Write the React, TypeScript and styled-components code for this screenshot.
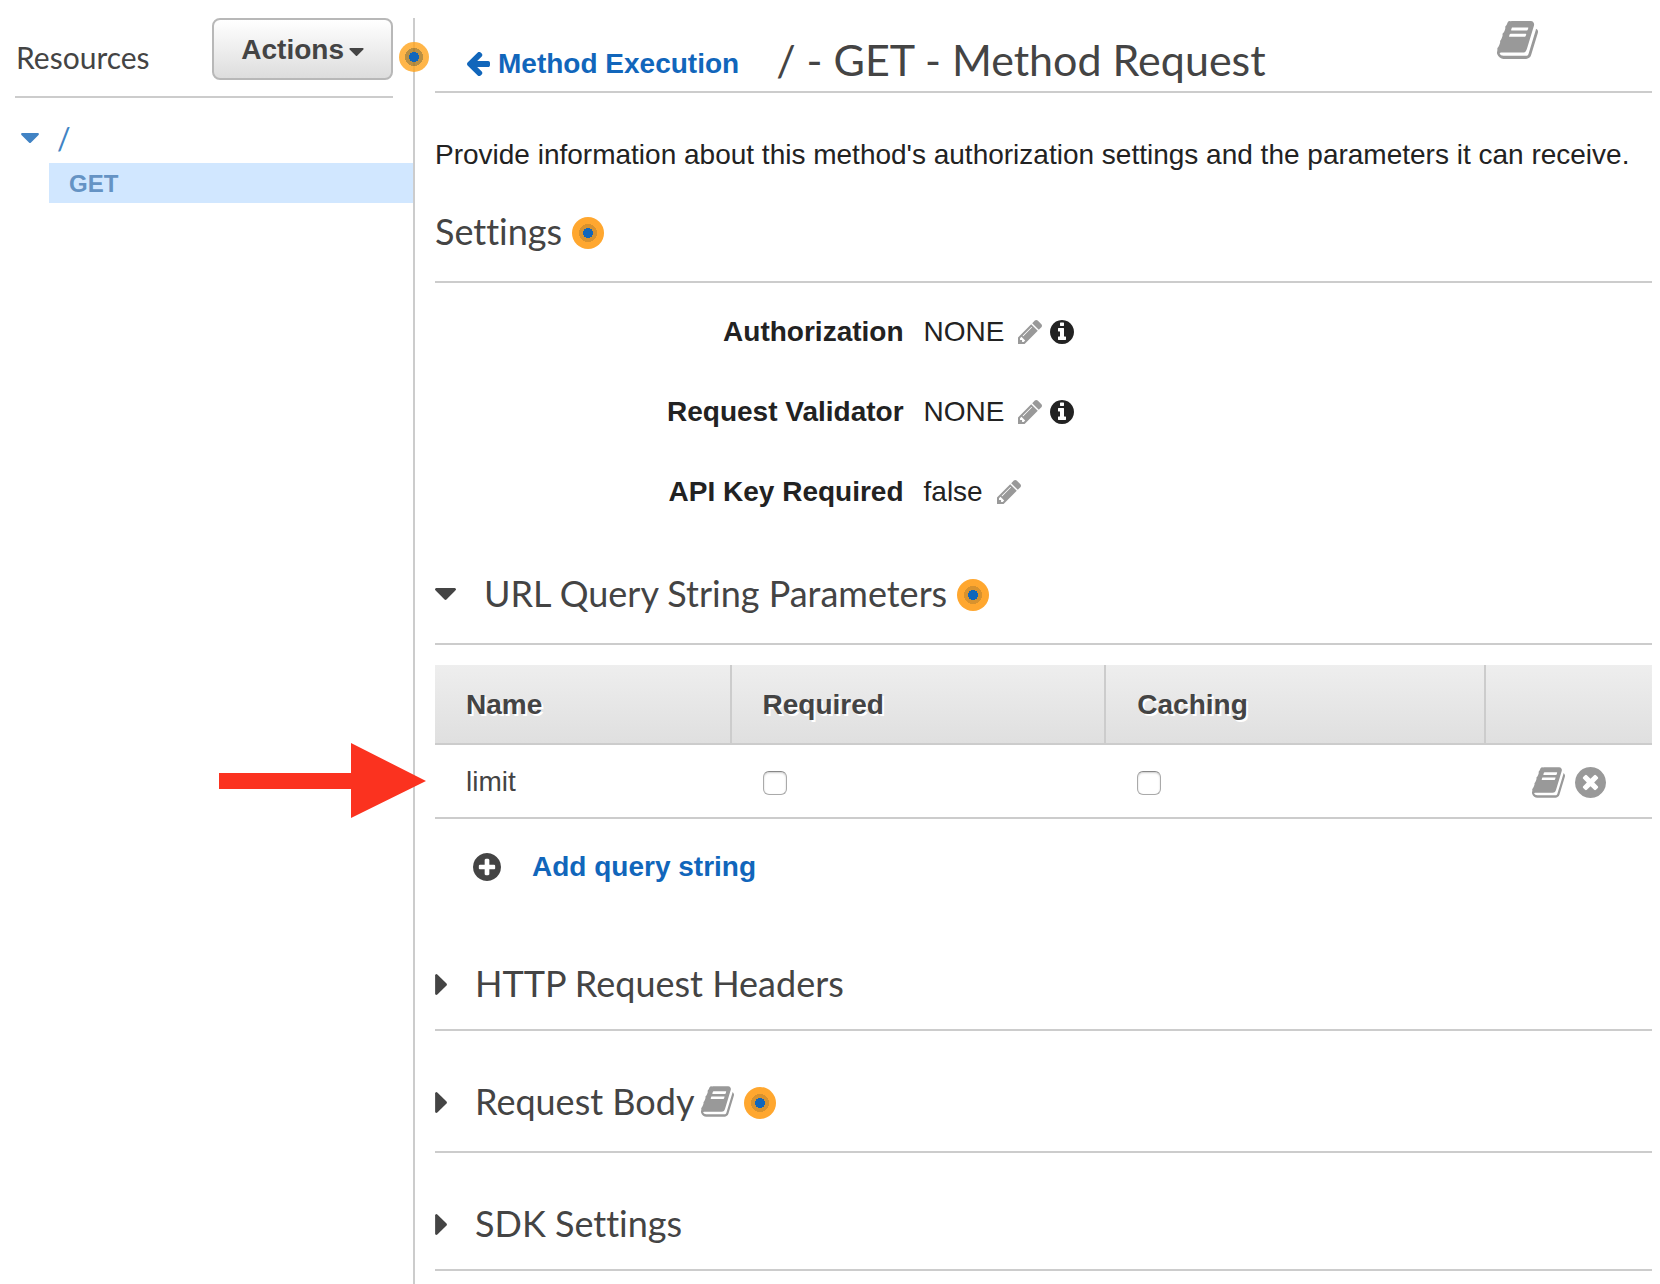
import React from "react";
import styled, { createGlobalStyle, css } from "styled-components";

const sans = `"Liberation Sans", Arial, Helvetica, sans-serif`;
const rule = "2px solid #ccc";

const displayFont = (size: number, line: number) => css`
  font: ${size}px/${line}px Lato, "Liberation Sans", sans-serif;
  font-variant-ligatures: none;
`;

const GlobalStyle = createGlobalStyle`
  *, *::before, *::after { box-sizing: border-box; }
  body {
    margin: 0;
    background: #fff;
    color: #222;
    font: 28px/40px ${sans};
  }
  button {
    border: 0;
    padding: 0;
    background: none;
    color: inherit;
    font: inherit;
    font-variant-ligatures: inherit;
    cursor: pointer;
  }
  h1, h2, p, dl, dd, ul { margin: 0; padding: 0; font-weight: 400; }
  a { text-decoration: none; }
  svg { display: block; flex: none; }
`;

/* ---------- icons ---------- */

const disc =
  "M1664 896q0 209-103 385.5t-279.5 279.5-385.5 103-385.5-103-279.5-279.5-103-385.5 103-385.5 279.5-279.5 385.5-103 385.5 103 279.5 279.5 103 385.5z";

const glyphs = {
  book: {
    box: "64 128 1664 1536",
    d: "M1703 478q40 57 18 129l-275 906q-19 64-76.5 107.5t-122.5 43.5h-923q-77 0-148.5-53.5t-99.5-131.5q-24-67-2-127 0-4 3-27t4-37q1-8-3-21.5t-3-19.5q2-11 8-21t16.5-23.5 16.5-23.5q23-38 45-91.5t30-91.5q3-10 .5-30t-.5-28q3-11 17-28t17-23q21-36 42-92t25-90q1-9-2.5-32t.5-28q4-13 22-30.5t22-22.5q19-26 42.5-84.5t27.5-96.5q1-8-3-25.5t-2-26.5q2-8 9-18t18-23 17-21q8-12 16.5-30.5t15-35 16-36 19.5-32 26.5-23.5 36-11.5 47.5 5.5l-1 3q38-9 51-9h761q74 0 114 56t18 130l-274 906q-36 119-71.5 153.5t-128.5 34.5h-869q-27 0-38 15-11 16-1 43 24 70 144 70h923q29 0 56-15.5t35-41.5l300-987q7-22 5-57 38 15 59 43zm-1064 2q-4 13 2 22.5t20 9.5h608q13 0 25.5-9.5t16.5-22.5l21-64q4-13-2-22.5t-20-9.5h-608q-13 0-25.5 9.5t-16.5 22.5zm-83 256q-4 13 2 22.5t20 9.5h608q13 0 25.5-9.5t16.5-22.5l21-64q4-13-2-22.5t-20-9.5h-608q-13 0-25.5 9.5t-16.5 22.5z",
  },
  pencil: {
    box: "128 149 1515 1515",
    d: "M491 1536l91-91-235-235-91 91v107h128v128h107zm523-928q0-22-22-22-10 0-17 7l-542 542q-7 7-7 17 0 22 22 22 10 0 17-7l542-542q7-7 7-17zm-54-192l416 416-832 832h-416v-416zm683 96q0 53-37 90l-166 166-416-416 166-165q36-38 90-38 53 0 91 38l235 234q37 39 37 91z",
  },
  info: {
    box: "128 128 1536 1536",
    d: "M1152 1376v-160q0-14-9-23t-23-9h-96v-512q0-14-9-23t-23-9h-320q-14 0-23 9t-9 23v160q0 14 9 23t23 9h96v320h-96q-14 0-23 9t-9 23v160q0 14 9 23t23 9h448q14 0 23-9t9-23zm-128-896v-160q0-14-9-23t-23-9h-192q-14 0-23 9t-9 23v160q0 14 9 23t23 9h192q14 0 23-9t9-23z" + disc,
  },
  plus: {
    box: "128 128 1536 1536",
    d: "M1344 960v-128q0-26-19-45t-45-19h-256v-256q0-26-19-45t-45-19h-128q-26 0-45 19t-19 45v256h-256q-26 0-45 19t-19 45v128q0 26 19 45t45 19h256v256q0 26 19 45t45 19h128q26 0 45-19t19-45v-256h256q26 0 45-19t19-45z" + disc,
  },
  remove: {
    box: "128 128 1536 1536",
    d: "M1277 1122q0-26-19-45l-181-181 181-181q19-19 19-45 0-27-19-46l-90-90q-19-19-46-19-26 0-45 19l-181 181-181-181q-19-19-45-19-27 0-46 19l-90 90q-19 19-19 46 0 26 19 45l181 181-181 181q-19 19-19 45 0 27 19 46l90 90q19 19 46 19 26 0 45-19l181-181 181 181q19 19 45 19 27 0 46-19l90-90q19-19 19-46z" + disc,
  },
  back: {
    box: "128 213 1536 1494",
    d: "M1664 896v128q0 53-32.5 90.5t-84.5 37.5h-704l293 294q38 36 38 90t-38 90l-75 76q-37 37-90 37-52 0-91-37l-651-652q-37-37-37-90 0-52 37-91l651-650q38-38 91-38 52 0 90 38l75 74q38 38 38 91t-38 91l-293 293h704q52 0 84.5 37.5t32.5 90.5z",
  },
  caretDown: {
    box: "384 640 1024 576",
    d: "M1408 704q0 26-19 45l-448 448q-19 19-45 19t-45-19l-448-448q-19-19-19-45t19-45 45-19h896q26 0 45 19t19 45z",
  },
  caretRight: {
    box: "576 384 576 1024",
    d: "M1152 896q0 26-19 45l-448 448q-19 19-45 19t-45-19-19-45v-896q0-26 19-45t45-19 45 19l448 448q19 19 19 45z",
  },
};

type IconProps = { name: keyof typeof glyphs; width: number; height: number };

const Icon = ({ name, width, height }: IconProps) => (
  <svg width={width} height={height} viewBox={glyphs[name].box} fill="currentColor" fillRule="evenodd" aria-hidden="true">
    <path d={glyphs[name].d} />
  </svg>
);

/* ---------- shared parts ---------- */

const IconButton = styled.button<{ $dark?: boolean }>`
  display: flex;
  color: ${(p) => (p.$dark ? "#222" : "#999")};
`;

const Pulse = styled.button`
  flex: none;
  width: 32px;
  height: 32px;
  margin: 4px 0 0 3px;
  border-radius: 50%;
  background: radial-gradient(circle, #16b 5px, #d8922e 5px 9px, #ffa72f 9px);
`;

/* ---------- sidebar ---------- */

const Shell = styled.div`
  display: flex;
  min-height: 100vh;
  padding-top: 18px;
`;

const Sidebar = styled.nav`
  position: relative;
  flex: 0 0 25%;
  min-width: 380px;
  border-right: ${rule};
`;

const SidebarHeader = styled.header`
  display: flex;
  justify-content: space-between;
  align-items: center;
  margin: 0 20px 0 15px;
  padding-bottom: 16px;
  border-bottom: ${rule};
`;

const SidebarTitle = styled.h2`
  padding: 16px 0 0 1px;
  color: #444;
  ${displayFont(30, 36)}
`;

const ActionsButton = styled.button`
  display: flex;
  align-items: center;
  gap: 5px;
  height: 62px;
  padding: 2px 27px 0;
  border: 2px solid #b8b8b8;
  border-radius: 8px;
  background: linear-gradient(#fff, #ddd);
  color: #444;
  font-weight: 700;

  svg {
    margin-top: 4px;
  }
`;

const SidebarPulse = styled(Pulse)`
  position: absolute;
  top: 24px;
  right: -16px;
  width: 30px;
  height: 30px;
  margin: 0;
  background: radial-gradient(circle, #16b 5px, rgba(168, 115, 20, 0.8) 5px 9px, rgba(255, 163, 27, 0.8) 9px);
`;

const Tree = styled.ul`
  padding-top: 20px;
  list-style: none;
`;

const RootNode = styled.button`
  display: flex;
  align-items: center;
  gap: 18px;
  height: 45px;
  padding: 0 0 6px 21px;
  color: #4183c4;
  ${displayFont(30, 36)}
`;

const MethodNode = styled.a`
  display: block;
  margin-left: 49px;
  padding: 2px 0 0 20px;
  background: #d1e7ff;
  color: #6593c4;
  font-size: 24px;
  line-height: 38px;
  font-weight: 700;
`;

/* ---------- main column ---------- */

const Main = styled.main`
  flex: 1;
  min-width: 0;
  padding: 0 8px 12px 20px;
`;

const PageHeader = styled.header`
  display: flex;
  align-items: baseline;
  padding: 15px 114px 4px 31px;
  border-bottom: ${rule};
`;

const BackLink = styled.a`
  display: flex;
  align-items: center;
  gap: 8px;
  color: #16b;
  font-weight: 700;
`;

const Title = styled.h1`
  flex: 1;
  margin-left: 37px;
  color: #444;
  ${displayFont(43, 54)}
`;

const HeaderDocs = styled(IconButton)`
  align-self: flex-start;
  margin-top: -12px;
`;

const Intro = styled.p`
  padding: 42px 0 34px;
`;

const SectionHeader = styled.header<{ $tall?: boolean }>`
  display: flex;
  align-items: center;
  gap: 7px;
  padding-bottom: ${(p) => (p.$tall ? 28 : 24)}px;
  border-bottom: ${rule};
  color: #444;
`;

const SectionTitle = styled.h2`
  ${displayFont(36, 44)}
`;

const Toggle = styled.button<{ $gap: number }>`
  display: flex;
  align-items: center;
  gap: ${(p) => p.$gap}px;

  svg {
    margin-top: 2px;
  }
`;

const Section = styled.section`
  margin-top: 48px;
`;

const SettingsList = styled.dl`
  display: grid;
  gap: 40px;
  padding: 29px 0 59px;
`;

const Setting = styled.div`
  display: grid;
  grid-template-columns: 38.5% 1fr;
  column-gap: 20px;
`;

const SettingName = styled.dt`
  font-weight: 700;
  text-align: right;
`;

const SettingValue = styled.dd`
  display: flex;
  align-items: center;
  gap: 8px;
`;

const ValueText = styled.span`
  margin-right: 6px;
`;

/* ---------- parameter table ---------- */

const ParamTable = styled.table`
  width: 100%;
  margin-top: 20px;
  border-spacing: 0;
  table-layout: fixed;
  color: #444;
`;

const Col = styled.col<{ $share: number }>`
  width: ${(p) => p.$share}%;
`;

const HeadRow = styled.tr`
  background: linear-gradient(#eee, #dfdfdf);
`;

const HeadCell = styled.th`
  height: 80px;
  padding: 2px 0 0 31px;
  border-bottom: ${rule};
  text-align: left;
  text-shadow: 2px 2px 0 #fff;

  & + & {
    border-left: ${rule};
  }
`;

const Cell = styled.td`
  position: relative;
  height: 74px;
  padding: 2px 0 0 31px;
  border-bottom: ${rule};
`;

const CheckBox = styled.input`
  display: block;
  appearance: none;
  width: 24px;
  height: 24px;
  margin: 2px 0 0 2px;
  border: 1px solid #aaa;
  border-top-color: #888;
  border-radius: 6px;
  background: #fff;
  box-shadow: inset 0 1px 2px #ccc;
`;

const RowActions = styled.div`
  display: flex;
  align-items: center;
  gap: 10px;
  padding-left: 17px;
`;

const Pointer = styled.div`
  position: absolute;
  top: -2px;
  left: -216px;
  color: #fb321f;
  pointer-events: none;
`;

const AddButton = styled.button`
  display: flex;
  align-items: center;
  gap: 31px;
  margin: 28px 0 74px 38px;
  color: #444;
`;

const AddLabel = styled.span`
  color: #16b;
  font-weight: 700;
`;

const settings = [
  { name: "Authorization", value: "NONE", info: true },
  { name: "Request Validator", value: "NONE", info: true },
  { name: "API Key Required", value: "false", info: false },
];

const CollapsedToggle = ({ children }: { children: React.ReactNode }) => (
  <SectionTitle>
    <Toggle $gap={28} aria-expanded="false">
      <Icon name="caretRight" width={12} height={21} />
      {children}
    </Toggle>
  </SectionTitle>
);

export default function App() {
  return (
    <>
      <GlobalStyle />
      <Shell>
        <Sidebar aria-label="Resources">
          <SidebarHeader>
            <SidebarTitle>Resources</SidebarTitle>
            <ActionsButton>
              Actions
              <Icon name="caretDown" width={15} height={8} />
            </ActionsButton>
          </SidebarHeader>
          <SidebarPulse aria-label="Help with actions" />
          <Tree>
            <li>
              <RootNode aria-expanded="true">
                <Icon name="caretDown" width={18} height={10} />/
              </RootNode>
              <MethodNode href="#get">GET</MethodNode>
            </li>
          </Tree>
        </Sidebar>

        <Main>
          <PageHeader>
            <BackLink href="#method-execution">
              <Icon name="back" width={24} height={24} />
              Method Execution
            </BackLink>
            <Title>/ - GET - Method Request</Title>
            <HeaderDocs aria-label="Documentation">
              <Icon name="book" width={41} height={38} />
            </HeaderDocs>
          </PageHeader>

          <Intro>Provide information about this method's authorization settings and the parameters it can receive.</Intro>

          <SectionHeader $tall>
            <SectionTitle>Settings</SectionTitle>
            <Pulse aria-label="Help with settings" />
          </SectionHeader>
          <SettingsList>
            {settings.map((s) => (
              <Setting key={s.name}>
                <SettingName>{s.name}</SettingName>
                <SettingValue>
                  <ValueText>{s.value}</ValueText>
                  <IconButton aria-label={`Edit ${s.name}`}>
                    <Icon name="pencil" width={24} height={24} />
                  </IconButton>
                  {s.info && (
                    <IconButton $dark aria-label={`About ${s.name}`}>
                      <Icon name="info" width={24} height={24} />
                    </IconButton>
                  )}
                </SettingValue>
              </Setting>
            ))}
          </SettingsList>

          <SectionHeader $tall>
            <SectionTitle>
              <Toggle $gap={28} aria-expanded="true">
                <Icon name="caretDown" width={21} height={12} />
                URL Query String Parameters
              </Toggle>
            </SectionTitle>
            <Pulse aria-label="Help with query string parameters" />
          </SectionHeader>
          <ParamTable>
            <colgroup>
              <Col $share={24.2} />
              <Col $share={30.8} />
              <Col $share={31.2} />
              <Col $share={13.8} />
            </colgroup>
            <thead>
              <HeadRow>
                <HeadCell>Name</HeadCell>
                <HeadCell>Required</HeadCell>
                <HeadCell>Caching</HeadCell>
                <HeadCell aria-label="Row actions" />
              </HeadRow>
            </thead>
            <tbody>
              <tr>
                <Cell>
                  limit
                  <Pointer>
                    <svg width="208" height="76" viewBox="0 0 208 76" fill="currentColor" aria-hidden="true">
                      <path d="M0 30H132V0L207 38L132 75V46H0Z" />
                    </svg>
                  </Pointer>
                </Cell>
                <Cell>
                  <CheckBox type="checkbox" aria-label="limit required" />
                </Cell>
                <Cell>
                  <CheckBox type="checkbox" aria-label="limit caching" />
                </Cell>
                <Cell>
                  <RowActions>
                    <IconButton aria-label="Document limit">
                      <Icon name="book" width={33} height={31} />
                    </IconButton>
                    <IconButton aria-label="Remove limit">
                      <Icon name="remove" width={31} height={31} />
                    </IconButton>
                  </RowActions>
                </Cell>
              </tr>
            </tbody>
          </ParamTable>
          <AddButton>
            <Icon name="plus" width={28} height={28} />
            <AddLabel>Add query string</AddLabel>
          </AddButton>

          <SectionHeader>
            <CollapsedToggle>HTTP Request Headers</CollapsedToggle>
          </SectionHeader>
          <Section>
            <SectionHeader $tall>
              <CollapsedToggle>Request Body</CollapsedToggle>
              <IconButton aria-label="Document request body">
                <Icon name="book" width={33} height={31} />
              </IconButton>
              <Pulse aria-label="Help with request body" />
            </SectionHeader>
          </Section>
          <Section>
            <SectionHeader>
              <CollapsedToggle>SDK Settings</CollapsedToggle>
            </SectionHeader>
          </Section>
        </Main>
      </Shell>
    </>
  );
}
